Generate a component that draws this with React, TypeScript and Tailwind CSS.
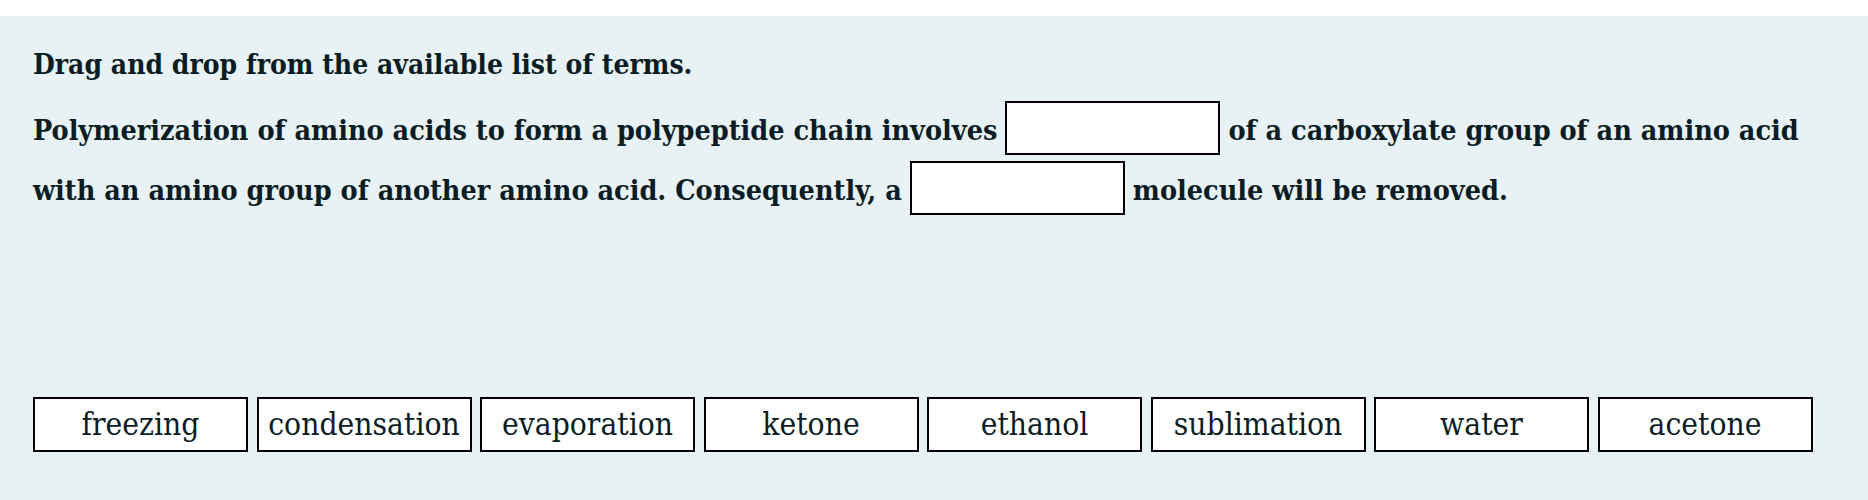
import React from "react";

const terms = ["freezing", "condensation", "evaporation", "ketone", "ethanol", "sublimation", "water", "acetone"];

function Blank() {
  return (
    <span className="mx-[8px] inline-block h-[54px] w-[215px] border-2 border-black bg-white align-[-15px]" />
  );
}

export default function App() {
  return (
    <div className="min-h-[500px] bg-white" style={{ fontFamily: '"DejaVu Serif Condensed", "DejaVu Serif", serif' }}>
      <div className="mt-[16px] h-[484px] bg-[#e8f1f4] px-[33px] pt-[30px] text-[#0b1d24]">
        <p className="text-[28px] font-bold leading-[38px]">Drag and drop from the available list of terms.</p>
        <p className="mt-[16px] whitespace-nowrap text-[28.5px] font-bold leading-[60px]">
          Polymerization of amino acids to form a polypeptide chain involves
          <Blank />
          of a carboxylate group of an amino acid
          <br />
          with an amino group of another amino acid. Consequently, a
          <Blank />
          molecule will be removed.
        </p>
        <div className="mt-[177px] flex gap-[8.5px]">
          {terms.map((t) => (
            <div
              key={t}
              className="flex h-[55px] w-[215px] items-center justify-center border-2 border-black bg-white text-[31.5px]"
            >
              {t}
            </div>
          ))}
        </div>
      </div>
    </div>
  );
}
